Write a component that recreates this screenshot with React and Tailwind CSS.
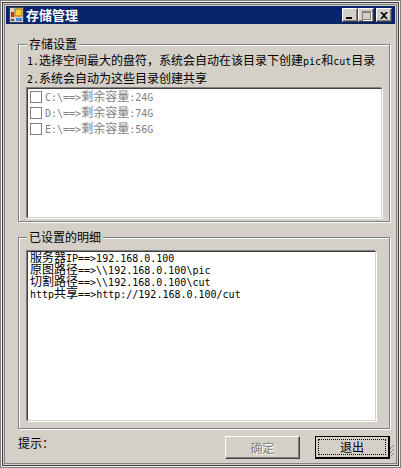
const Txt = ({ children }) => {
    // latin runs are half-width like the bitmap font in the screenshot
    const parts = children.split(/([\x00-\x7f]+)/).filter(Boolean);
    return parts.map((p, i) =>
        /^[\x00-\x7f]/.test(p)
            ? <span key={i} className='font-["DejaVu_Sans_Mono",monospace] text-[10px]'>{p}</span>
            : <span key={i}>{p}</span>
    );
};

const drives = ['C:\\==>剩余容量:24G', 'D:\\==>剩余容量:74G', 'E:\\==>剩余容量:56G'];
const details = [
    '服务器IP==>192.168.0.100',
    '原图路径==>\\\\192.168.0.100\\pic',
    '切割路径==>\\\\192.168.0.100\\cut',
    'http共享==>http://192.168.0.100/cut',
];

const CaptionButton = ({ children, className }) => (
    <div className={`w-[16px] h-[14px] bg-[#d4d0c8] border border-t-white border-l-white border-r-[#404040] border-b-[#404040] shadow-[inset_-1px_-1px_0_#808080] flex items-center justify-center ${className || ''}`}>
        {children}
    </div>
);

const GroupBox = ({ title, className, children }) => (
    <div className={`relative border border-[#808080] shadow-[inset_1px_1px_0_#fff,1px_1px_0_#fff] ${className}`}>
        <span className="absolute left-[8px] top-[-8px] bg-[#d4d0c8] px-[2px] text-[12px] leading-[14px] text-black">{title}</span>
        {children}
    </div>
);

const SunkenBox = ({ className, children }) => (
    <div className={`bg-white border border-t-[#404040] border-l-[#404040] border-r-[#d4d0c8] border-b-[#d4d0c8] shadow-[-1px_-1px_0_#808080,1px_1px_0_#fff] ${className}`}>
        {children}
    </div>
);

export default function App() {
    return (
        <div className='relative w-[401px] h-[468px] bg-[#d4d0c8] p-[6px] shadow-[inset_0_0_0_1px_#808080,inset_0_0_0_2px_#f0f0f0,inset_0_0_0_3px_#404040,inset_0_0_0_4px_#d4d0c8,inset_0_0_0_5px_#808080] font-["Noto_Sans_CJK_SC",sans-serif] flex flex-col'>
            {/* Title bar */}
            <div className="h-[18px] bg-[#0a246a] flex items-center pl-[3px] pr-[3px] shrink-0">
                <svg width="16" height="16" viewBox="0 0 16 16" className="shrink-0">
                    <rect x="0.5" y="0.5" width="14" height="15" fill="#d4d0c8" stroke="#404040" />
                    <rect x="6" y="2" width="7" height="7" fill="#ffcc33" stroke="#a07000" />
                    <rect x="2" y="5" width="3" height="5" fill="#d03020" />
                    <rect x="2" y="12" width="3" height="2" fill="#555" />
                    <rect x="7" y="11" width="6" height="3" fill="#4488dd" />
                </svg>
                <span className="ml-[1px] text-[13px] leading-[14px] font-bold text-white">存储管理</span>
                <div className="ml-auto flex items-center">
                    <CaptionButton>
                        <div className="w-[6px] h-[2px] bg-black mt-[6px] mr-[2px]" />
                    </CaptionButton>
                    <CaptionButton>
                        <div className="w-[9px] h-[9px] border border-t-2 border-[#808080] shadow-[1px_1px_0_#fff]" />
                    </CaptionButton>
                    <CaptionButton className="ml-[2px]">
                        <svg width="8" height="7" viewBox="0 0 8 7">
                            <path d="M0 0h2l2 2 2-2h2L5 3.500 8 7H6L4 5 2 7H0l3-3.500z" fill="#000" />
                        </svg>
                    </CaptionButton>
                </div>
            </div>

            <div className="flex-1 flex flex-col pl-[12px] pr-[5px] pt-[20px]">
                <GroupBox title="存储设置" className="h-[178px] pt-[6px] px-[8px] shrink-0">
                    <p className="h-[18px] text-[12px] leading-[18px] text-black whitespace-nowrap"><Txt>1.选择空间最大的盘符，系统会自动在该目录下创建pic和cut目录</Txt></p>
                    <p className="h-[18px] text-[12px] leading-[18px] text-black whitespace-nowrap"><Txt>2.系统会自动为这些目录创建共享</Txt></p>
                    <SunkenBox className="h-[130px] w-[355px] mt-[1px] pl-[2px]">
                        {drives.map(d => (
                            <div key={d} className="h-[16px] flex items-start">
                                <span className="w-[12px] h-[12px] mt-[2px] border border-[#808080] bg-white mr-[3px] shrink-0" />
                                <span className="h-[14px] text-[12px] leading-[14px] text-[#808080] whitespace-nowrap"><Txt>{d}</Txt></span>
                            </div>
                        ))}
                    </SunkenBox>
                </GroupBox>

                <GroupBox title="已设置的明细" className="h-[192px] mt-[15px] pt-[13px] px-[8px] shrink-0">
                    <SunkenBox className="h-[170px] w-[349px] pl-[2px]">
                        {details.map(d => (
                            <div key={d} className="h-[12px] text-[12px] leading-[10px] text-black whitespace-nowrap"><Txt>{d}</Txt></div>
                        ))}
                    </SunkenBox>
                </GroupBox>

                <div className="flex items-start mt-[7px]">
                    <span className="text-[12px] leading-[14px] text-black">提示：</span>
                    <button className="ml-auto w-[75px] h-[23px] bg-[#d4d0c8] border border-t-white border-l-white border-r-[#404040] border-b-[#404040] shadow-[inset_-1px_-1px_0_#808080] text-[12px] text-[#808080] [text-shadow:1px_1px_0_#fff]">确定</button>
                    <button className="ml-[15px] w-[75px] h-[23px] bg-[#d4d0c8] border-2 border-black border-t-[1px] border-l-[1px] text-[12px] text-black p-[2px]">
                        <span className="block w-full h-full border border-dotted border-black leading-[13px]">退出</span>
                    </button>
                </div>
            </div>

            {/* Resize grip */}
            <svg width="6" height="12" viewBox="0 0 6 12" className="absolute left-[389px] top-[445px]">
                <path d="M5 0 1 4M5 4 1 8M5 8 2 11" stroke="#808080" fill="none" />
            </svg>
        </div>
    );
}
